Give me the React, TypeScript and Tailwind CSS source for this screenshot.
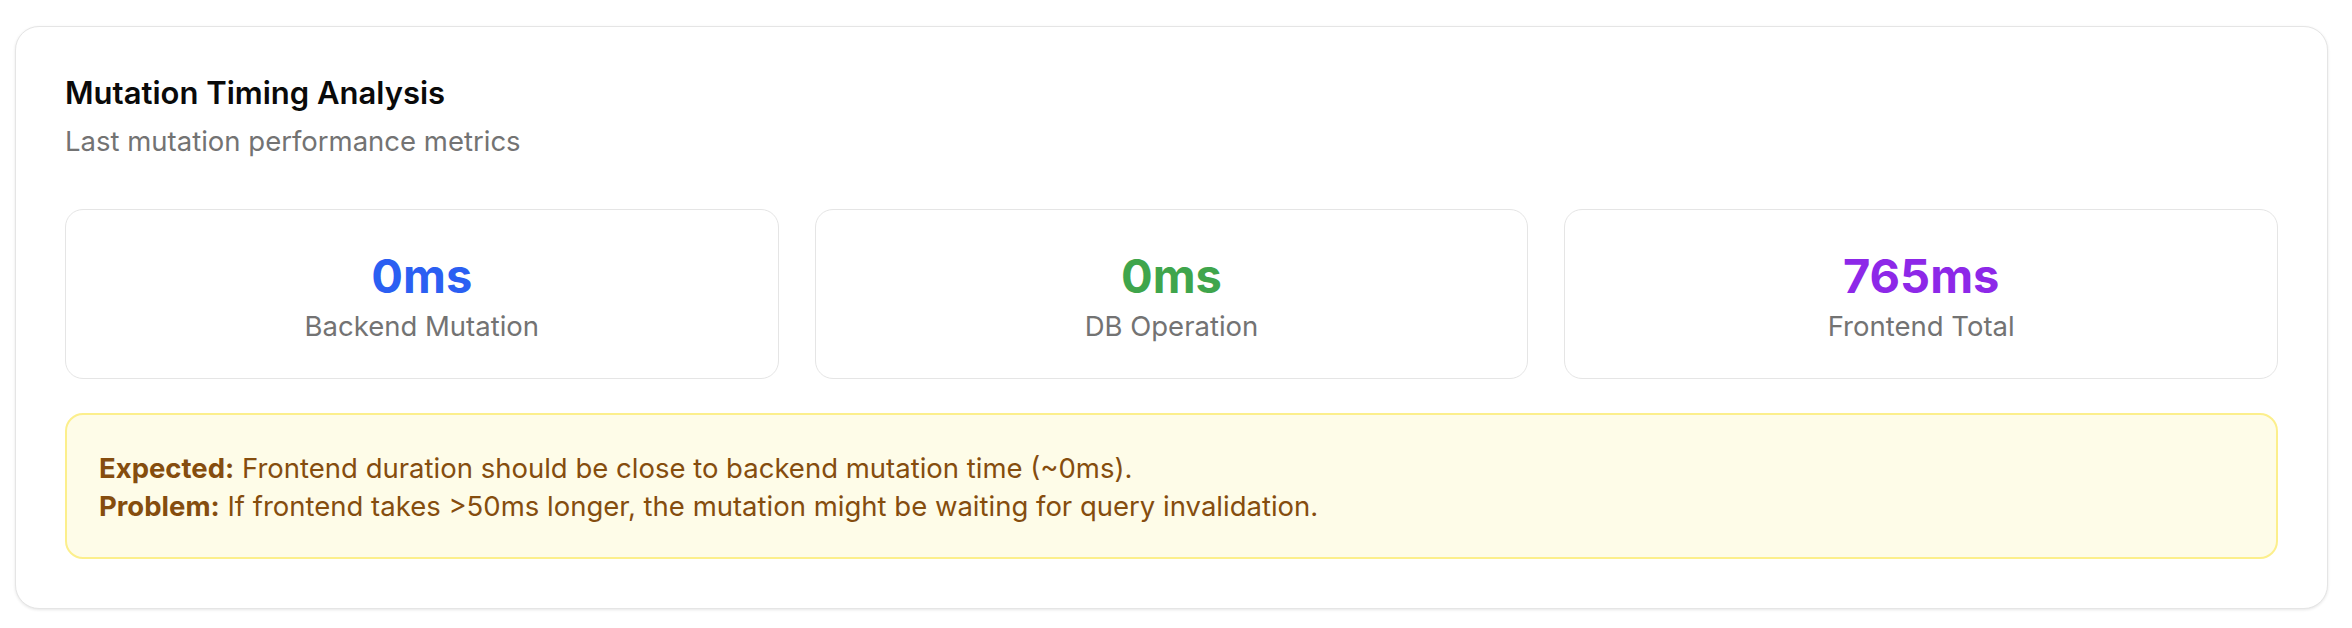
const METRICS = [
  { value: '0ms', label: 'Backend Mutation', color: 'text-[#2b5ff2]' },
  { value: '0ms', label: 'DB Operation', color: 'text-[#3fa54c]' },
  { value: '765ms', label: 'Frontend Total', color: 'text-[#8d28e8]' },
]

function MetricCard({ value, label, color }: { value: string; label: string; color: string }) {
  return (
    <div className="flex flex-col items-center rounded-[18px] border border-[#e5e5e5] bg-white pt-[38px] pb-[33px]">
      <p className={`text-[47px] font-bold leading-[56px] ${color}`}>{value}</p>
      <p className="mt-[3px] text-[27.5px] leading-[38px] text-[#737373]">{label}</p>
    </div>
  )
}

export default function App() {
  return (
    <div className="min-h-screen bg-white pt-[26px] pl-[15px] font-['Inter',sans-serif]">
      <div className="w-[2313px] rounded-[24px] border border-[#e5e5e5] bg-white px-[49px] pt-[45px] pb-[49px] shadow-[0_1px_3px_rgba(0,0,0,0.1)]">
        <h2 className="text-[31px] font-semibold leading-[42px] text-[#0a0a0a]">Mutation Timing Analysis</h2>
        <p className="mt-[6px] text-[27.5px] leading-[42px] text-[#737373]">Last mutation performance metrics</p>

        <div className="mt-[47px] grid grid-cols-3 gap-[36px]">
          {METRICS.map((m) => (
            <MetricCard key={m.label} {...m} />
          ))}
        </div>

        <div className="mt-[34px] rounded-[18px] border-2 border-[#fcef8c] bg-[#fefce8] px-[32px] pt-[34px] pb-[32px] text-[27.5px] leading-[38px] text-[#854d0e]">
          <p>
            <strong className="font-bold">Expected:</strong> Frontend duration should be close to backend mutation time (~0ms).
          </p>
          <p>
            <strong className="font-bold">Problem:</strong> If frontend takes &gt;50ms longer, the mutation might be waiting for query invalidation.
          </p>
        </div>
      </div>
    </div>
  )
}
